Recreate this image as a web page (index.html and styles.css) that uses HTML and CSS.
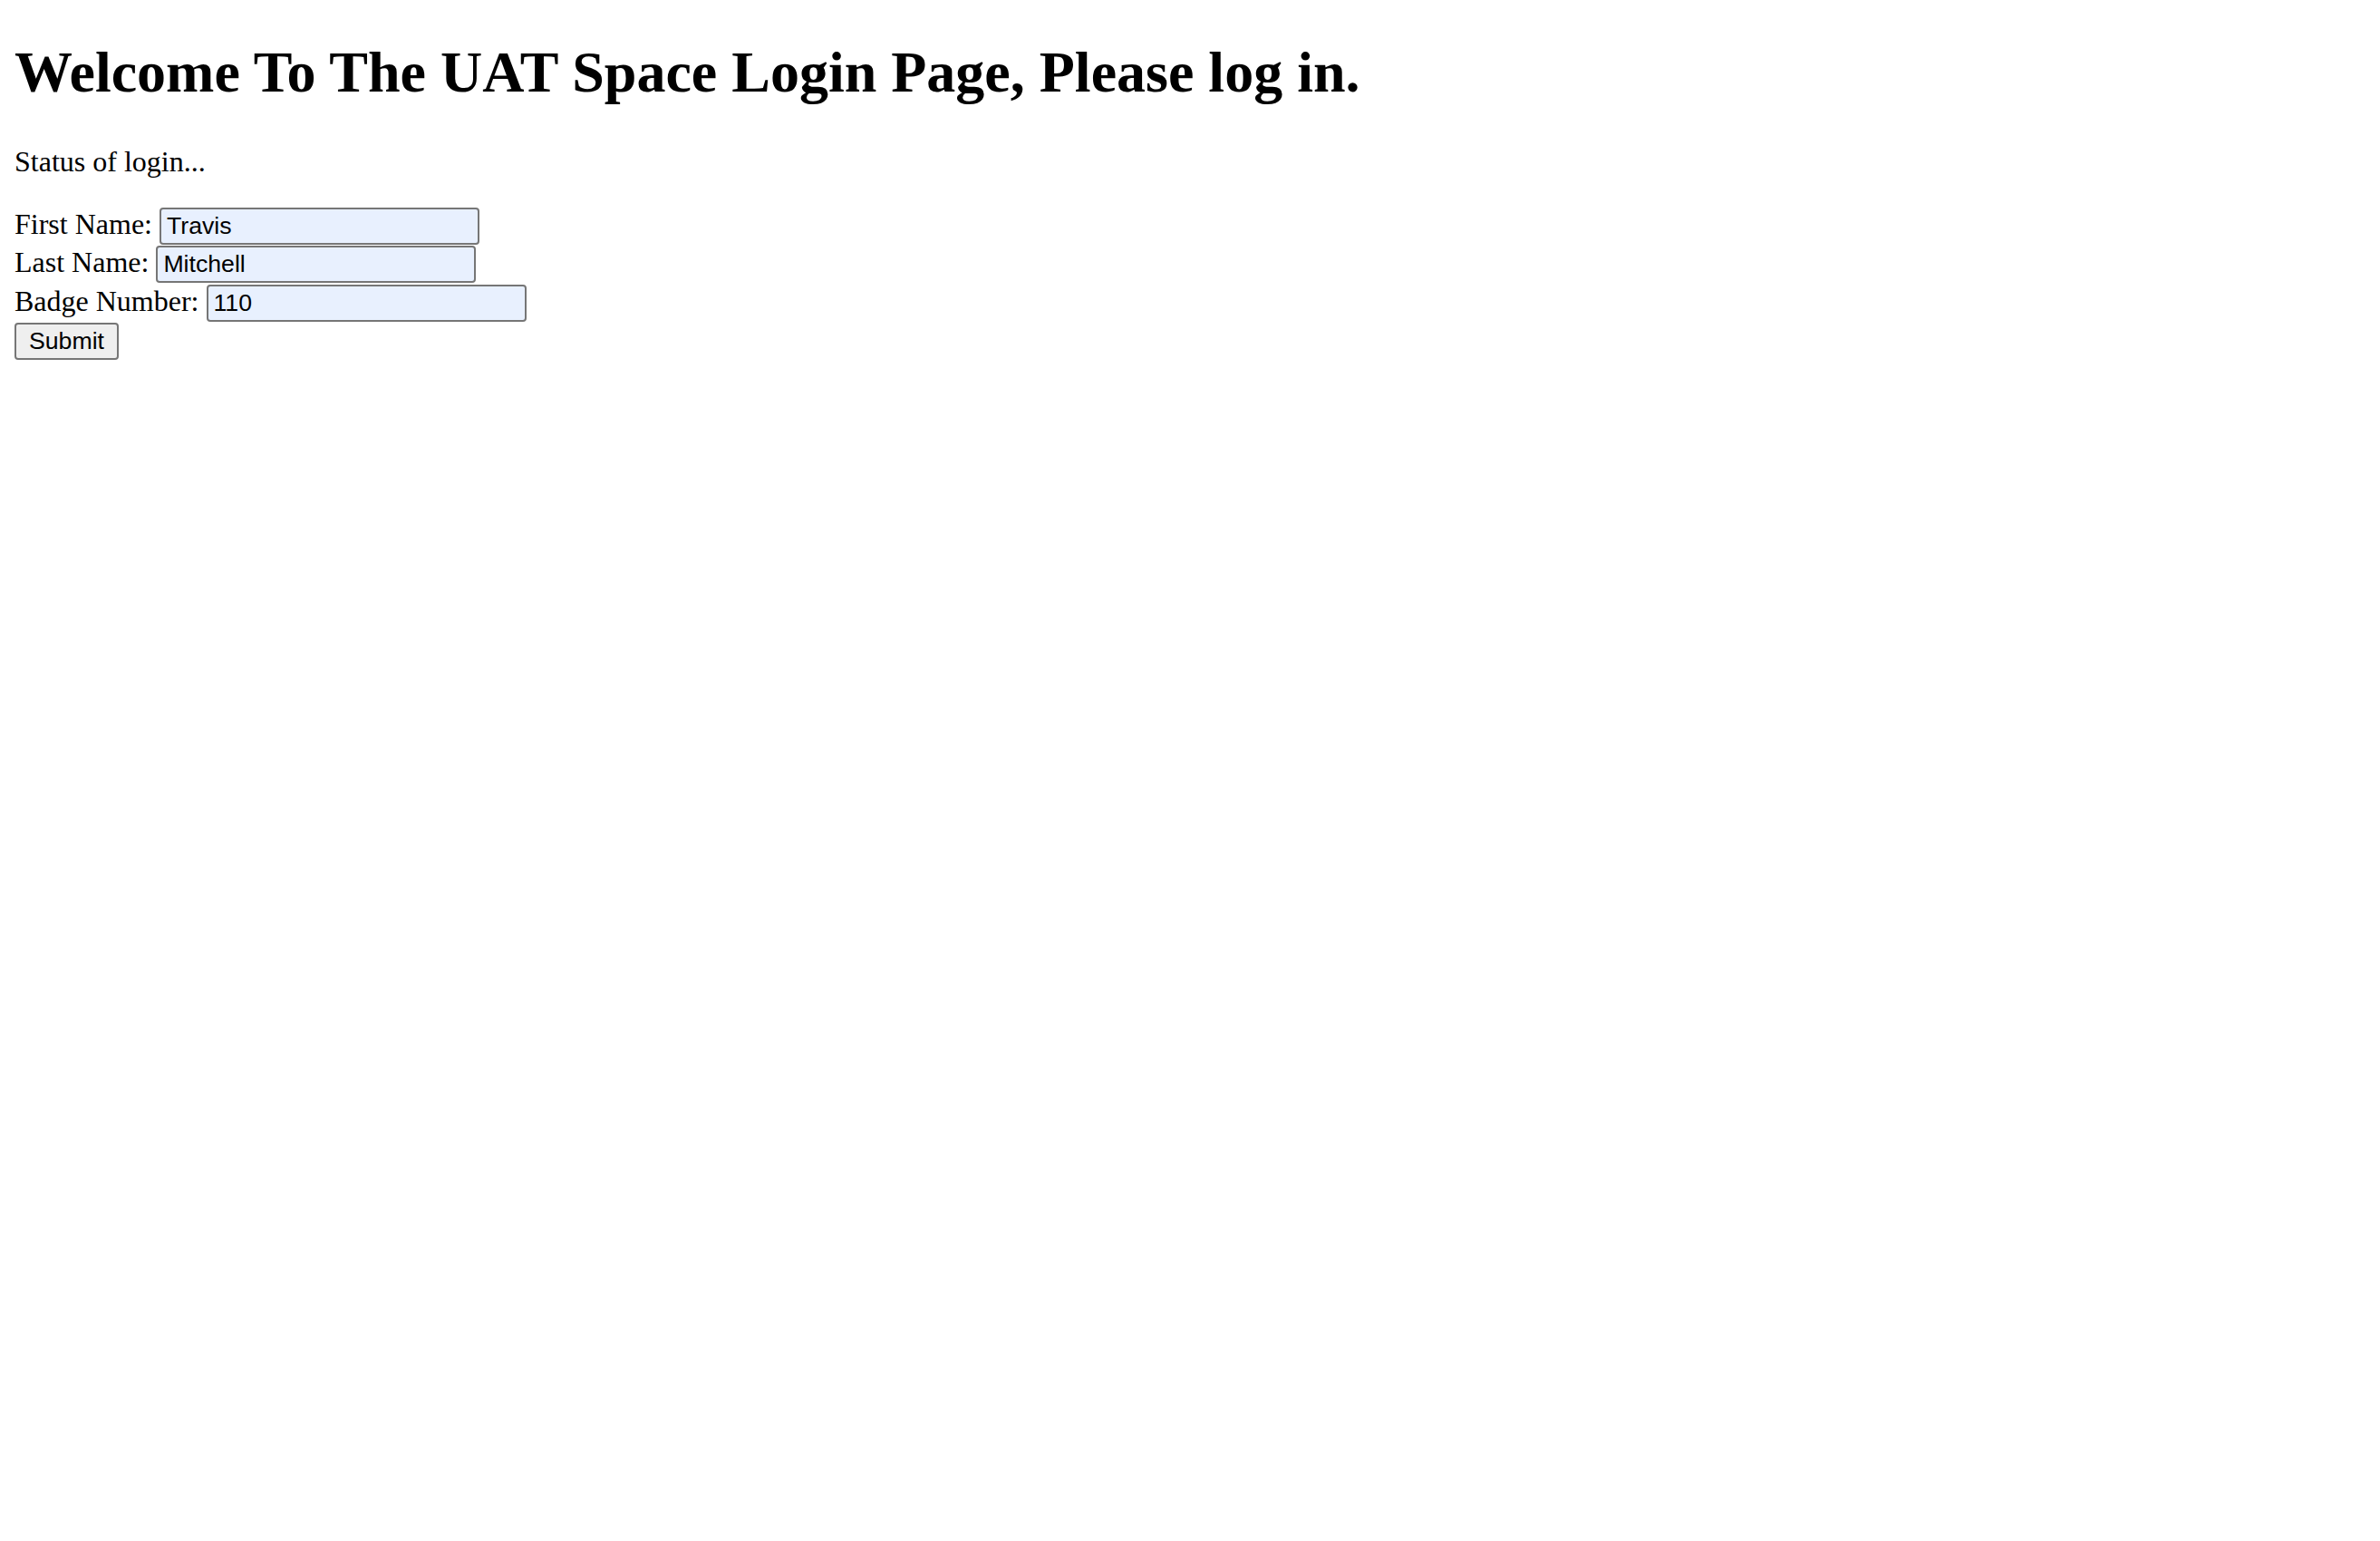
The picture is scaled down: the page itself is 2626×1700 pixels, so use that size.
FILE: index.html
```html
<!DOCTYPE html>
<html>
<head>
<meta charset="utf-8">
<title>UAT Space Login</title>
<link rel="stylesheet" href="styles.css">
</head>
<body class="page">
<h1 class="title">Welcome To The UAT Space Login Page, Please log in.</h1>
<p class="status">Status of login...</p>
<form class="login">
First Name: <input class="field" type="text" value="Travis"><br>
Last Name: <input class="field" type="text" value="Mitchell"><br>
Badge Number: <input class="field" type="text" value="110"><br>
<button class="submit" type="button">Submit</button>
</form>
</body>
</html>
```
FILE: styles.css
```css
html {
  background: #ffffff;
}
.page {
  margin: 16px;
  font-family: "Liberation Serif", "Times New Roman", serif;
  font-size: 32px;
  color: #000000;
}
.title {
  font-size: 64px;
  font-weight: bold;
  margin: 27px 0 42.88px;
}
.status {
  margin: 32px 0;
}
.login {
  margin: 0;
}
.field {
  font-family: "Liberation Sans", Arial, sans-serif;
  font-size: 26.67px;
  color: #000000;
  background: #e8f0fe;
  border: 2px solid #767676;
  border-radius: 4px;
  padding: 2px 6px;
  width: 353px;
  height: 41px;
  box-sizing: border-box;
  margin: 0 0 1.5px;
}
.submit {
  font-family: "Liberation Sans", Arial, sans-serif;
  font-size: 26.67px;
  color: #000000;
  background: #efefef;
  border: 2px solid #767676;
  border-radius: 4px;
  padding: 2px 14px;
  height: 41px;
  box-sizing: border-box;
  margin: 0;
}
```
